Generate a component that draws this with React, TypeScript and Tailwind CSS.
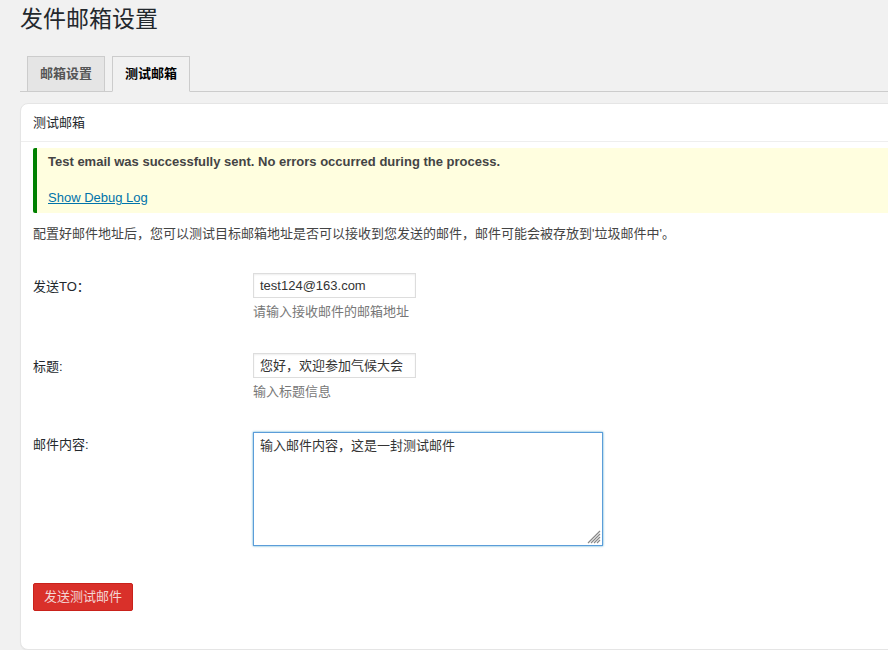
import React from "react";

const cjk = { fontFamily: '"Liberation Sans", "Noto Sans CJK SC", sans-serif' };

export default function App() {
  return (
    <div className="min-h-[650px] w-[888px] overflow-hidden bg-[#f1f1f1] text-[13px] text-[#444]" style={cjk}>
      <div className="pl-[20px]">
        <h1 className="pt-[4px] text-[23px] leading-[30px] font-normal text-[#23282d]">发件邮箱设置</h1>
        <div className="mt-[22px] flex h-[36px] items-end gap-[7px] border-b border-[#ccc] pl-[7px]">
          <div className="-mb-px flex h-[36px] w-[78px] items-center justify-center border border-[#ccc] bg-[#e5e5e5] text-[13px] font-bold text-[#555]">
            邮箱设置
          </div>
          <div className="-mb-px flex h-[36px] w-[78px] items-center justify-center border border-b-[#f1f1f1] border-[#ccc] bg-[#f1f1f1] text-[13px] font-bold text-black">
            测试邮箱
          </div>
        </div>
        <div className="mt-[11px] h-[547px] w-[900px] rounded-[8px] border border-[#e5e5e5] bg-white shadow-[0_1px_1px_rgba(0,0,0,0.04)]">
          <div className="flex h-[38px] items-center border-b border-[#eee] pl-[12px] text-[13px] text-[#23282d]">测试邮箱</div>
          <div className="pl-[12px]">
            <div className="mt-[6px] h-[65px] border-l-4 border-[#008000] bg-[#fffedf] pl-[11px] pt-[6px] rounded-l-[2px]">
              <div className="text-[13px] leading-[16px] font-bold text-[#444]">Test email was successfully sent. No errors occurred during the process.</div>
              <a className="mt-[20px] block text-[13px] leading-[16px] text-[#0073aa] underline">Show Debug Log</a>
            </div>
            <p className="mt-[12px] text-[13px] leading-[18px] text-[#444]">
              配置好邮件地址后，您可以测试目标邮箱地址是否可以接收到您发送的邮件，邮件可能会被存放到'垃圾邮件中'。
            </p>
            <div className="mt-[30px] flex">
              <div className="w-[220px] pt-[4px] text-[#23282d]">发送TO：</div>
              <div>
                <div className="flex h-[25px] w-[163px] items-center border border-[#ddd] px-[6px] text-[13px] text-[#333] shadow-[inset_0_1px_2px_rgba(0,0,0,0.07)]">test124@163.com</div>
                <div className="mt-[5px] text-[13px] leading-[18px] text-[#777]">请输入接收邮件的邮箱地址</div>
              </div>
            </div>
            <div className="mt-[32px] flex">
              <div className="w-[220px] pt-[4px] text-[#23282d]">标题:</div>
              <div>
                <div className="flex h-[25px] w-[163px] items-center border border-[#ddd] px-[6px] text-[13px] text-[#333] shadow-[inset_0_1px_2px_rgba(0,0,0,0.07)]">您好，欢迎参加气候大会</div>
                <div className="mt-[5px] text-[13px] leading-[18px] text-[#777]">输入标题信息</div>
              </div>
            </div>
            <div className="mt-[31px] flex">
              <div className="w-[220px] pt-[3px] text-[#23282d]">邮件内容:</div>
              <div className="relative h-[114px] w-[350px] border border-[#5b9dd9] px-[6px] pt-[3px] text-[13px] text-[#333] shadow-[0_0_2px_rgba(30,140,190,0.8)]">
                输入邮件内容，这是一封测试邮件
                <svg className="absolute bottom-[1px] right-[1px]" width="14" height="14" viewBox="0 0 14 14">
                  <path d="M13 1 L1 13 M13 4 L4 13 M13 7 L7 13 M13 10 L10 13" stroke="#888" strokeWidth="1.2" />
                </svg>
              </div>
            </div>
            <button className="mt-[37px] flex h-[28px] w-[100px] items-center justify-center rounded-[2px] border border-[#c9221b] bg-[#d9302a] text-[13px] text-[#f3d6d4]">
              发送测试邮件
            </button>
          </div>
        </div>
      </div>
    </div>
  );
}
